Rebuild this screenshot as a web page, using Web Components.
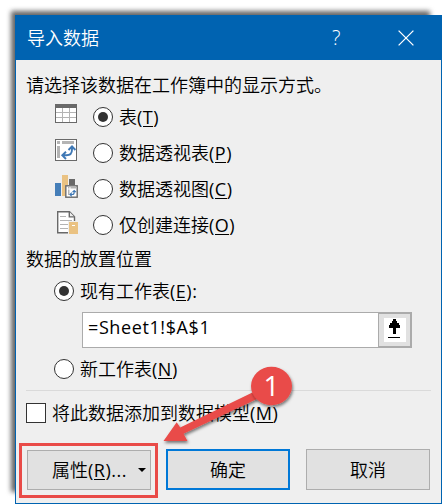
<!DOCTYPE html>
<html lang="zh-CN">
<head>
<meta charset="utf-8">
<title>导入数据</title>
<style>
html, body { margin: 0; background: #fff; overflow: hidden; }
body { width: 442px; height: 504px; font: 350 18px/24px "Open Sans", "Noto Sans CJK SC", sans-serif; color: #000; }
</style>
</head>
<body>
<import-dialog></import-dialog>
<script>
const define = (name, html, setup) => customElements.define(name, class extends HTMLElement {
  constructor() {
    super();
    const t = document.createElement('template');
    t.innerHTML = html;
    this.attachShadow({ mode: 'open' }).append(t.content.cloneNode(true));
    if (setup) setup(this, this.shadowRoot);
  }
});

define('key-label', `
<style>
:host { display: inline-block; white-space: nowrap; }
span { font-weight: 400; letter-spacing: .5px; }
u { text-decoration: none; display: inline-block; line-height: 17px; border-bottom: 1px solid currentColor; }
</style><slot></slot><span>(<u><slot name="key"></slot></u>)<slot name="after"></slot></span>`);

define('title-bar', `
<style>
:host { display: flex; align-items: center; height: 45px; box-sizing: border-box; padding: 0 28px 0 12px; background: #0063b1; color: #fff; }
span { flex: 1; }
i { font-style: normal; font-size: 20px; width: 10px; margin-right: 56px; }
svg { display: block; }
</style>
<span><slot></slot></span><i>?</i>
<svg width="16" height="16" viewBox="0 0 16 16"><path d="M.6.6 15.4 15.4M15.4.6.6 15.4" stroke="#fff" stroke-width="1.3"/></svg>`);

define('radio-option', `
<style>
:host { display: flex; align-items: center; gap: 6px; height: 36px; }
b { box-sizing: border-box; width: 20px; height: 20px; border: 1.4px solid #333; border-radius: 50%; background: #fff; display: grid; place-items: center; }
:host([checked]) b::after { content: ""; width: 10px; height: 10px; border-radius: 50%; background: #333; }
</style><b></b><slot></slot>`);

define('check-option', `
<style>
:host { display: flex; align-items: center; gap: 6px; height: 20px; }
b { box-sizing: border-box; width: 20px; height: 20px; border: 1px solid #333; background: #fff; }
</style><b></b><slot></slot>`);

define('option-row', `
<style>
:host { display: grid; grid-template-columns: 38px auto; align-items: center; height: 36px; }
</style><slot name="icon"></slot><slot></slot>`);

define('push-button', `
<style>
:host { display: flex; box-sizing: border-box; align-items: center; justify-content: center; width: 124px; height: 41px; border: 1px solid #adadad; background: #e1e1e1; }
:host([primary]) { border: 2px solid #0078d7; }
:host([menu]) { height: 40px; justify-content: space-between; padding: 0 4px 0 24px; }
svg { display: none; }
:host([menu]) svg { display: block; }
</style><slot></slot><svg width="8" height="4"><path d="M0 0h8L4 4z"/></svg>`);

const icons = {
  table: `<rect x=".5" y=".5" width="21" height="18" fill="#fff" stroke="#696969"/><path d="M0 0h22v4H0z" fill="#696969"/><path d="M1 8.5h20M1 13.5h20M7.5 4v14M14.5 4v14" stroke="#b4b4b4" fill="none"/>`,
  pivot: `<rect x=".5" y=".5" width="21" height="21" fill="#fff" stroke="#696969"/><path d="M2 2h3v3H2zM7 2h12v3H7zM2 7h3v12H2z" fill="#b4b4b4"/><path d="M8 16.3h3.4c3.7 0 5.6-2.2 5.6-5.8V8M11 12.7l-3.7 3.6L11 20M13.5 11 17 7.4l3.4 3.6" fill="none" stroke="#3f78b5" stroke-width="1.9"/>`,
  chart: `<path d="M0 8h6v13H0z" fill="#457eb8"/><path d="M7 0h6v21H7z" fill="#eac282"/><path d="M14 4h6v6h-6z" fill="#696969"/><path d="M10 10h13v13H10z" fill="#efefef"/><rect x="10.8" y="10.8" width="11.4" height="11.4" fill="#fff" stroke="#696969" stroke-width="1.4"/><path d="M13 12h1.5v1.5H13zM15.5 12H21v1.5h-5.5zM13 14.5h1.5V20H13z" fill="#b4b4b4"/><path d="M15 19.5h2.2c1.3 0 2-.8 2-2.3v-1.4M16.8 17.7 15 19.5l1.8 1.8M17.5 17.2l1.7-1.7 1.7 1.7" fill="none" stroke="#3f78b5" stroke-width="1.2"/>`,
  link: `<path d="M2.7.7h11.8l5 5v16H2.7z" fill="#fff" stroke="#696969" stroke-width="1.4"/><path d="M14.3.7v5.2h5.2" fill="#efefef" stroke="#696969" stroke-width="1.4"/><path d="M5 5.5h6M5 9.5h12M5 13.5h8M5 17.5h8" stroke="#b4b4b4"/><path d="M13 10h11v13H13z" fill="#efefef"/><path d="M14 11h9v12h-9z" fill="#eac282"/><path d="M17 14.5h3" stroke="#fff"/>`
};
define('source-icon', `<style>:host { display: block; width: 24px; height: 28px; } :host([kind=table]) { height: 26px; } svg { display: block; }</style><svg width="24" height="24"></svg>`,
  (host, root) => { root.querySelector('svg').innerHTML = icons[host.getAttribute('kind')]; });

define('range-field', `
<style>
:host { display: flex; box-sizing: border-box; width: 330px; height: 36px; border: 1px solid #ababab; background: #fff; font-weight: 400; }
span { flex: 1; padding: 2px 0 0 5px; letter-spacing: .6px; }
div { box-sizing: border-box; width: 33px; height: 34px; border: 1px solid #ababab; background: #e1e1e1; display: grid; place-items: center; }
svg { display: block; }
</style><span><slot></slot></span>
<div><svg width="22" height="24" shape-rendering="crispEdges"><path d="M0 0h22v24H0z" fill="#fff"/><path d="M9 1h3v2h1v2h2v2h1v3h-4v6H9v-6H5V7h1V5h2V3h1zM4 19h12v1H4z"/></svg></div>`);

define('step-callout', `
<style>
:host { position: absolute; left: 0; top: 0; width: 442px; height: 504px; pointer-events: none; }
svg { display: block; position: absolute; inset: 0; }
span { position: absolute; left: 251px; top: 371px; width: 41px; height: 28px; text-align: center; color: #fff; font: 400 28px/28px "Open Sans", sans-serif; }
</style>
<svg width="442" height="504">
<defs><filter id="s" x="-20%" y="-20%" width="150%" height="150%"><feDropShadow dx="1" dy="2" stdDeviation="1.5" flood-opacity=".5"/></filter></defs>
<rect x="20.5" y="444.5" width="136" height="52" fill="none" stroke="#e94b48" stroke-width="3"/>
<path filter="url(#s)" d="M163.5 441 176.7 422.3l3.5 5.2L254 391.7l4 6.8-74.5 35.2 4 7.3z" fill="#e94b48"/>
<ellipse filter="url(#s)" cx="271.5" cy="386" rx="20.5" ry="19.2" fill="#e94b48"/>
</svg><span><slot></slot></span>`);

define('import-dialog', `
<style>
:host { display: block; position: relative; box-sizing: border-box; width: 442px; height: 504px; padding: 15px 0 0 15px; overflow: hidden; }
.shade { position: absolute; left: 11px; top: 11px; width: 419px; height: 481px; background: #666; filter: blur(2.4px); }
main { position: relative; box-sizing: border-box; width: 427px; height: 489px; background: #efefef; border: solid #0063b1; border-width: 0 1px 1px; }
title-bar { margin: 0 -1px; }
.body { display: flex; flex-direction: column; padding: 13px 10px 0; }
.options { margin-top: 2px; padding-left: 29px; }
.dest { margin: 4px 0 0; }
.sub { margin-left: 28px; }
.current { margin-top: 2px; }
range-field { margin: 3px 0 0 56px; }
.new { margin-top: 3px; }
hr { width: 405px; height: 1px; border: 0; margin: 3px 0 12px; background: #dadada; }
footer { display: flex; align-items: flex-end; margin: 26px 0 0 1px; }
push-button { margin-left: 16px; }
push-button[menu] { margin: 0 -1px 0 0; }
</style>
<div class="shade"></div>
<main>
<title-bar>导入数据</title-bar>
<div class="body">
<div>请选择该数据在工作簿中的显示方式。</div>
<div class="options">
<option-row><source-icon slot="icon" kind="table"></source-icon><radio-option checked><key-label>表<span slot="key">T</span></key-label></radio-option></option-row>
<option-row><source-icon slot="icon" kind="pivot"></source-icon><radio-option><key-label>数据透视表<span slot="key">P</span></key-label></radio-option></option-row>
<option-row><source-icon slot="icon" kind="chart"></source-icon><radio-option><key-label>数据透视图<span slot="key">C</span></key-label></radio-option></option-row>
<option-row><source-icon slot="icon" kind="link"></source-icon><radio-option><key-label>仅创建连接<span slot="key">O</span></key-label></radio-option></option-row>
</div>
<div class="dest">数据的放置位置</div>
<radio-option class="sub current" checked><key-label>现有工作表<span slot="key">E</span><span slot="after">:</span></key-label></radio-option>
<range-field>=Sheet1!$A$1</range-field>
<radio-option class="sub new"><key-label>新工作表<span slot="key">N</span></key-label></radio-option>
<hr>
<check-option><key-label>将此数据添加到数据模型<span slot="key">M</span></key-label></check-option>
<footer><push-button menu><key-label>属性<span slot="key">R</span><span slot="after">...</span></key-label></push-button><push-button primary>确定</push-button><push-button>取消</push-button></footer>
</div>
</main>
<step-callout>1</step-callout>`);
</script>
</body>
</html>
